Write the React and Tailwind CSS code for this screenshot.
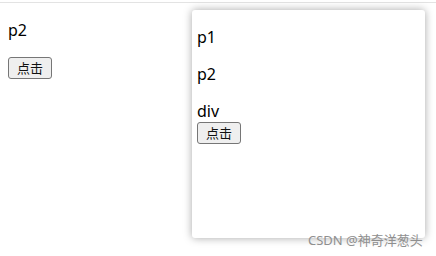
import React from 'react';

function Btn() {
  return (
    <button className="block h-[22px] px-[8px] border border-[#767676] bg-[#efefef] rounded-[3px] text-[13px] leading-[18px] text-[#111]">
      点击
    </button>
  );
}

export default function App() {
  return (
    <div
      className="relative w-[436px] h-[256px] bg-white overflow-hidden text-black"
      style={{ fontFamily: "'Noto Sans', 'Noto Sans CJK SC', sans-serif" }}
    >
      <div className="h-[2px]" />
      <div className="border-t border-[#e3e3e3]" />
      <div className="flex">
        {/* left side */}
        <div className="w-[192px] px-2 pt-[17px]">
          <p className="text-[16px] leading-[21px] mb-4">p2</p>
          <Btn />
        </div>

        {/* popup panel */}
        <div className="mt-[7px] w-[233px] h-[228px] bg-white rounded-[3px] shadow-[0_0_8px_rgba(0,0,0,0.35)] px-[5px] pt-[17px]">
          <p className="text-[16px] leading-[21px] mb-4">p1</p>
          <p className="text-[16px] leading-[21px] mb-4">p2</p>
          <div className="text-[16px] leading-[21px]">div</div>
          <Btn />
        </div>
      </div>

      <span className="absolute left-[308px] top-[232px] text-[13px] leading-[16px] text-[#8f8f8f] whitespace-nowrap">
        CSDN @神奇洋葱头
      </span>
    </div>
  );
}
